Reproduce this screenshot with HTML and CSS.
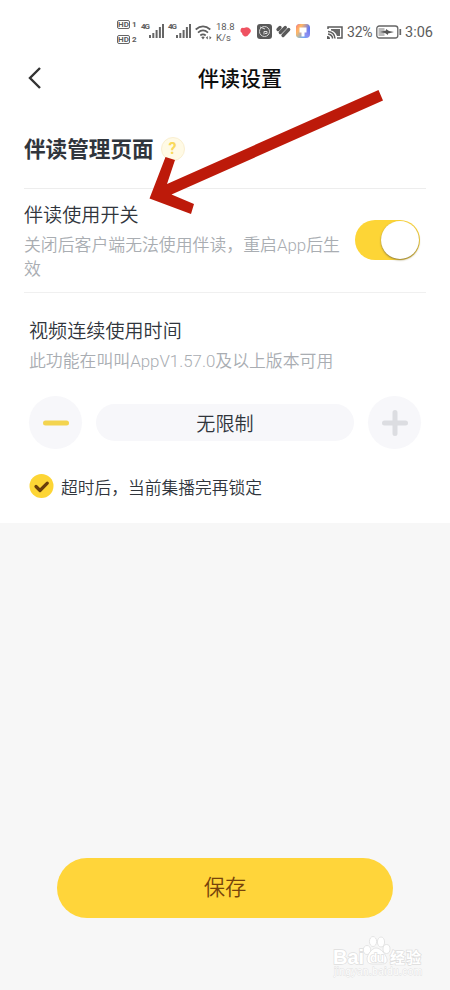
FILE: index.html
```html
<!DOCTYPE html>
<html lang="zh-CN">
<head>
<meta charset="utf-8">
<title>伴读设置</title>
<link rel="stylesheet" href="styles.css">
</head>
<body>
<div class="screen">
  <div class="panel">
    <div class="status">
      <div class="hd"><span><b>HD</b><i>1</i></span><span><b>HD</b><i>2</i></span></div>
      <div class="signal"><em>4G</em><svg width="15" height="14" viewBox="0 0 15 14"><path d="M1 14v-3M4.300 14V9M7.600 14V6M10.900 14V3M14 14V0" stroke="#666" stroke-width="2"/></svg></div>
      <div class="signal"><em>4G</em><svg width="15" height="14" viewBox="0 0 15 14"><path d="M1 14v-3M4.300 14V9M7.600 14V6M10.900 14V3M14 14V0" stroke="#666" stroke-width="2"/></svg></div>
      <svg class="wifi" width="17" height="15" viewBox="0 0 17 15"><path d="M.700 4.500Q8 -1.800 15.300 4.500M3 7.600Q8 3.200 13 7.600M5.300 10.500Q8 8.200 10.700 10.500" fill="none" stroke="#5f5f5f" stroke-width="1.700"/><path d="M6.200 12L8 14.500 9.800 12Q8 11 6.200 12M10.800 12.800l2-1.800v3.600zM16.500 12.800l-2-1.800v3.600z" fill="#5f5f5f"/></svg>
      <div class="speed"><span>18.8</span><span>K/s</span></div>
      <svg class="apps" width="70" height="16" viewBox="0 0 70 16">
        <defs><linearGradient id="glow" x1="0" y1="1" x2="1" y2="0"><stop offset="0" stop-color="#4bc3f6"/><stop offset=".5" stop-color="#8d8df0"/><stop offset="1" stop-color="#4b6cf0"/></linearGradient><linearGradient id="warm" x1="0" y1="0" x2=".8" y2=".5"><stop offset="0" stop-color="#ff7f70"/><stop offset=".4" stop-color="#ffb765"/><stop offset="1" stop-color="#ffb765" stop-opacity="0"/></linearGradient></defs>
        <path d="M.500 6Q1 3 4 4q4-2 6 1 2 2-.5 4.500Q6.500 14 4 12 2 11 2 9 0 8 .500 6" fill="#ef5261"/>
        <rect x="17" y="0" width="15" height="15" rx="3" fill="#595959"/><circle cx="24.500" cy="7.500" r="5" fill="none" stroke="#d9d9d9" stroke-width="1"/><path d="M20 3l5 2M24 10.500V7.500h3v2h-2" fill="none" stroke="#ddd"/>
        <path d="M38 5.500l2-2M40.300 8.500l5-5M43 11.500l5.700-6" stroke="#595959" stroke-width="3.300" stroke-linecap="round"/>
        <rect x="56" y="0" width="14" height="14" rx="4" fill="url(#glow)"/><rect x="56" y="0" width="14" height="14" rx="4" fill="url(#warm)"/><path d="M59.500 3.500h7v5h-2v4h-3v-4h-2z" fill="#fff"/>
      </svg>
      <svg class="cast" width="16" height="13" viewBox="0 0 16 13"><path d="M1 3V1h14v11h-5M1 5.500Q7.500 6 8 12.500M1 8q4 .5 4.700 4.500" fill="none" stroke="#5b5b5b" stroke-width="1.500"/><path d="M4 3h9v7h-3Q8 5 4 4.500z" fill="#686868"/><path d="M0 10q3 0 3 3H0z" fill="#5b5b5b"/></svg>
      <span class="percent">32%</span>
      <svg class="battery" width="26" height="14" viewBox="0 0 26 14"><rect x=".8" y="1" width="21" height="12" rx="2.500" fill="#fff" stroke="#666" stroke-width="1.300"/><rect x="2.500" y="3" width="6" height="8" fill="#bbb"/><path d="M4 7l6-1.500V4l3 2 5 1-6 1.500V10L9 8z" fill="#555"/><path d="M24.300 4v6" stroke="#666" stroke-width="1.700"/></svg>
      <span class="clock">3:06</span>
    </div>
    <header class="nav">
      <svg width="14" height="22" viewBox="0 0 14 22"><path d="M12 1L2 11l10 10" fill="none" stroke="#333" stroke-width="2.400"/></svg>
      <h1>伴读设置</h1>
    </header>
    <main>
      <div class="section-title"><h2>伴读管理页面</h2><span class="help">?</span></div>
      <div class="switch-row">
        <div class="switch-copy"><h3>伴读使用开关</h3><p>关闭后客户端无法使用伴读，重启App后生效</p></div>
        <div class="toggle"><span></span></div>
      </div>
      <section class="time">
        <h3>视频连续使用时间</h3>
        <p>此功能在叫叫AppV1.57.0及以上版本可用</p>
        <div class="stepper">
          <div class="round"><svg width="26" height="26" viewBox="0 0 26 26"><path d="M2.500 13h21" stroke="#f3d44f" stroke-width="5" stroke-linecap="round"/></svg></div>
          <div class="value">无限制</div>
          <div class="round"><svg width="26" height="26" viewBox="0 0 26 26"><path d="M2.500 13h21M13 2.500v21" stroke="#dcdde1" stroke-width="5" stroke-linecap="round"/></svg></div>
        </div>
        <div class="check"><svg width="25" height="25" viewBox="0 0 25 25"><circle cx="12.500" cy="12" r="12" fill="#fdd535"/><path d="M7 12.500l4 4 7.300-7.300" fill="none" stroke="#693e0c" stroke-width="3.200" stroke-linecap="round" stroke-linejoin="round"/></svg><span>超时后，当前集播完再锁定</span></div>
      </section>
    </main>
  </div>
  <footer><div class="save">保存</div></footer>
  <svg class="arrow" width="236" height="126" viewBox="148 89 236 126"><path d="M378.500 90L383 100.500 171.500 194.500 194 204 191 214 149.500 198.500 165.500 157 175 160 167 184z" fill="#bd1a0a"/></svg>
  <svg class="watermark" width="100" height="50" viewBox="330 930 100 50">
    <g fill="#fff" stroke="#dedede" stroke-width=".8">
      <ellipse cx="367" cy="950" rx="3.800" ry="4.500"/><ellipse cx="373" cy="941.500" rx="3.600" ry="5"/><ellipse cx="381" cy="942" rx="3.600" ry="5"/><ellipse cx="386.500" cy="949" rx="3.500" ry="4.500"/>
      <path d="M376 948C372 948 367 955 367 959Q367 964 372 964H382Q388 964 387 959C386 955 381 948 376 948Z"/>
      <text class="brand" x="333" y="964" textLength="31">Bai</text><text class="du" x="370" y="962" textLength="14">du</text><text class="brand-cn" x="390" y="963" textLength="31">经验</text>
      <text class="domain" x="334" y="975" textLength="88">jingyan.baidu.com</text>
    </g>
  </svg>
</div>
</body>
</html>
```
FILE: styles.css
```css
* { box-sizing: border-box; }
body, h1, h2, h3, p { margin: 0; }
body { font-family: Roboto, "Noto Sans CJK SC", sans-serif; color: #30353c; }
.screen { position: relative; display: flex; flex-direction: column; height: 990px; background: #f7f7f7; overflow: hidden; }
.panel { height: 523px; background: #fff; }
.status { display: flex; align-items: center; height: 54px; padding: 10px 0 0 117px; color: #5c5c5c; }
.status svg { flex: none; }
.hd { display: flex; flex-direction: column; gap: 6px; width: 24px; }
.hd span { display: flex; align-items: center; gap: 2px; height: 9px; }
.hd b { width: 13px; height: 9px; border: 1px solid #666; border-radius: 2px; font-size: 8px; line-height: 7px; text-align: center; }
.hd i { font: bold 8px/8px Roboto, sans-serif; }
.signal { display: flex; align-items: flex-end; width: 27px; height: 15px; margin-bottom: 3px; }
.signal em { align-self: flex-start; width: 8px; font: bold 8px/8px Roboto, sans-serif; letter-spacing: -1px; }
.speed { display: flex; flex-direction: column; width: 22px; margin-left: 4px; font-size: 9.5px; line-height: 11px; }
.apps { margin-left: 2px; }
.cast { margin-left: 17px; }
.percent { width: 27px; margin-left: 4px; font-size: 14px; line-height: 20px; letter-spacing: -.2px; }
.battery { margin: 0 0 1px 2px; }
.clock { margin-left: 3px; padding-top: 1px; font-size: 14.5px; line-height: 20px; white-space: nowrap; }
.nav { display: flex; align-items: center; height: 48px; padding-left: 28px; }
.nav h1 { margin-left: 156px; padding-top: 2px; color: #0d0d0d; font-size: 21px; line-height: 30px; font-weight: 500; }
main { padding: 31px 24px 0; }
.section-title { display: flex; align-items: center; gap: 7px; height: 32px; }
.section-title h2 { padding-top: 2px; font-size: 21.6px; line-height: 32px; font-weight: 700; }
.help { width: 24px; height: 24px; border: 1px solid #faefd0; border-radius: 50%; background: #fffae5; color: #f9d95b; font-size: 16px; line-height: 22px; font-weight: 700; text-align: center; }
.switch-row { display: flex; justify-content: space-between; height: 105px; margin-top: 23px; border-top: 1px solid #ededed; border-bottom: 1px solid #f0f0f0; }
.switch-copy { width: 318px; padding-top: 13px; }
h3 { font-size: 19.1px; line-height: 28px; font-weight: 350; }
p { color: #a9adb2; font-size: 16.87px; line-height: 24px; font-weight: 350; }
.switch-copy p { margin-top: 3px; }
.toggle { display: flex; justify-content: flex-end; width: 65px; height: 40px; margin: 31px 6px 0 0; padding: 1px; border-radius: 20px; background: #fdd536; }
.toggle span { width: 38px; height: 38px; border-radius: 50%; background: #fff; box-shadow: 0 1px 2px #8b7a3d; }
.time { padding: 25px 5px 0; }
.time p { margin-top: 3px; }
.stepper { display: flex; align-items: center; justify-content: space-between; height: 53px; margin-top: 23px; }
.round { display: flex; align-items: center; justify-content: center; width: 53px; height: 53px; border-radius: 50%; background: #f7f7fa; }
.value { width: 258px; height: 37px; border-radius: 19px; background: #f7f7fa; font-size: 19.1px; line-height: 41px; font-weight: 350; text-align: center; }
.check { display: flex; align-items: center; gap: 7px; height: 25px; margin-top: 25px; font-size: 16.75px; line-height: 25px; font-weight: 350; }
.check span { padding-top: 3px; }
footer { padding: 335px 57px 0; }
.save { height: 60px; border-radius: 30px; background: #ffd53a; color: #76430b; font-size: 21.3px; line-height: 60px; font-weight: 350; text-align: center; }
.arrow { position: absolute; left: 148px; top: 89px; }
.watermark { position: absolute; left: 330px; top: 930px; }
.watermark text { paint-order: stroke; stroke-width: 1.4px; }
.brand { font: bold 20px "Liberation Sans", sans-serif; }
.du { font: bold 12px "Liberation Sans", sans-serif; }
.brand-cn { font: bold 15px "Noto Sans CJK SC", sans-serif; }
.watermark .domain { font: 10px "Liberation Sans", sans-serif; stroke-width: .8px; }
```
